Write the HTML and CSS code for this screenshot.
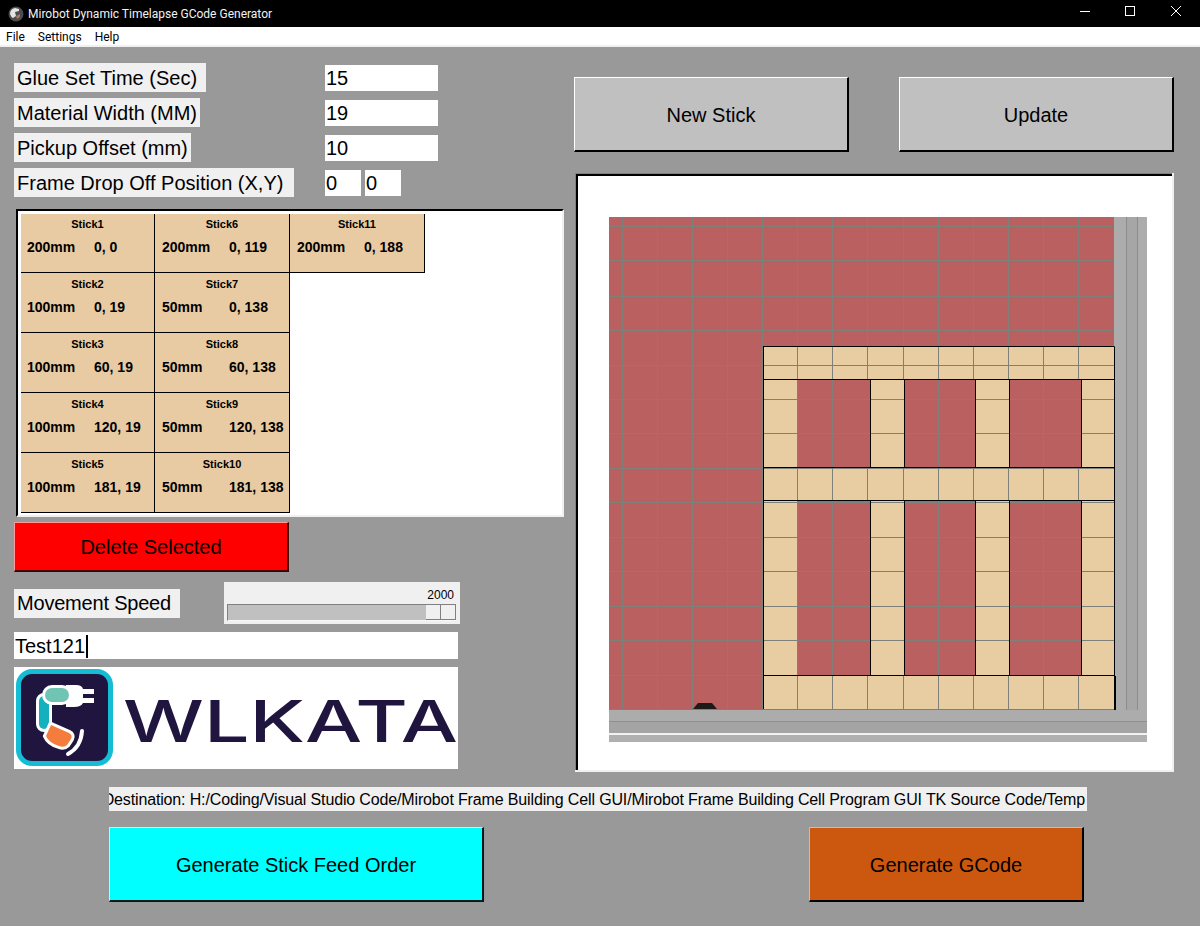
FILE: index.html
```html
<!DOCTYPE html>
<html lang="en">

<head>
    <meta charset="UTF-8">
    <title>Mirobot Dynamic Timelapse GCode Generator</title>
    <link rel="stylesheet" href="styles.css">
</head>

<body>
    <div class="app">
        <div class="titlebar">
            <svg class="app-icon" width="16" height="16" viewBox="0 0 16 16">
                <circle cx="8" cy="8" r="7.5" fill="#4c4c4c"/>
                <path d="M2 8 Q2 3 7 2 L11 3 L11 5 L7 6 L8 10 L5 12 Q3 11 2 8 Z" fill="#e4e4e4"/>
                <path d="M8 10 L12 8 L12 11 L9 13 Z" fill="#a8785e"/>
            </svg>
            <span class="title-text">Mirobot Dynamic Timelapse GCode Generator</span>
            <div class="win-btns">
                <svg width="46" height="27" viewBox="0 0 46 27"><path d="M19 11.5 H29" stroke="#fff"/></svg>
                <svg width="46" height="27" viewBox="0 0 46 27"><rect x="18.5" y="6.5" width="9" height="9" fill="none" stroke="#fff"/></svg>
                <svg width="46" height="27" viewBox="0 0 46 27"><path d="M18 6 L28 16 M28 6 L18 16" stroke="#fff"/></svg>
            </div>
        </div>
        <div class="menubar">
            <span>File</span>
            <span>Settings</span>
            <span>Help</span>
        </div>

        <div class="main">
            <div class="top">
                <div class="left">
                    <div class="form-row">
                        <div class="label">Glue Set Time (Sec)&nbsp;</div>
                        <div class="field">15</div>
                    </div>
                    <div class="form-row">
                        <div class="label">Material Width (MM)</div>
                        <div class="field">19</div>
                    </div>
                    <div class="form-row">
                        <div class="label">Pickup Offset (mm)</div>
                        <div class="field">10</div>
                    </div>
                    <div class="form-row">
                        <div class="label label-drop">Frame Drop Off Position (X,Y)</div>
                        <div class="field-pair">
                            <div class="field">0</div>
                            <div class="field">0</div>
                        </div>
                    </div>

                    <div class="stick-list">
                        <div class="stick"><div class="stick-name">Stick1</div><div class="stick-data"><span>200mm</span><span>0, 0</span></div></div>
                        <div class="stick"><div class="stick-name">Stick2</div><div class="stick-data"><span>100mm</span><span>0, 19</span></div></div>
                        <div class="stick"><div class="stick-name">Stick3</div><div class="stick-data"><span>100mm</span><span>60, 19</span></div></div>
                        <div class="stick"><div class="stick-name">Stick4</div><div class="stick-data"><span>100mm</span><span>120, 19</span></div></div>
                        <div class="stick"><div class="stick-name">Stick5</div><div class="stick-data"><span>100mm</span><span>181, 19</span></div></div>
                        <div class="stick"><div class="stick-name">Stick6</div><div class="stick-data"><span>200mm</span><span>0, 119</span></div></div>
                        <div class="stick"><div class="stick-name">Stick7</div><div class="stick-data"><span>50mm</span><span>0, 138</span></div></div>
                        <div class="stick"><div class="stick-name">Stick8</div><div class="stick-data"><span>50mm</span><span>60, 138</span></div></div>
                        <div class="stick"><div class="stick-name">Stick9</div><div class="stick-data"><span>50mm</span><span>120, 138</span></div></div>
                        <div class="stick"><div class="stick-name">Stick10</div><div class="stick-data"><span>50mm</span><span>181, 138</span></div></div>
                        <div class="stick"><div class="stick-name">Stick11</div><div class="stick-data"><span>200mm</span><span>0, 188</span></div></div>
                    </div>

                    <div class="btn btn-delete">Delete Selected</div>

                    <div class="speed-row">
                        <div class="label label-speed">Movement Speed</div>
                        <div class="scale">
                            <div class="scale-value">2000</div>
                            <div class="scale-trough">
                                <div class="scale-thumb"></div>
                            </div>
                        </div>
                    </div>

                    <div class="entry">Test121<span class="caret"></span></div>

                    <div class="logo">
                        <svg class="logo-icon" width="97" height="97" viewBox="0 0 97 97">
                            <rect width="97" height="97" rx="16" fill="#16bcd4"/>
                            <rect x="5" y="5" width="87" height="87" rx="11" fill="#20153f"/>
                            <path d="M50 16 H60 Q66 16 67 20 H78 V25 H67 V29 H78 V34 H67 Q65 38 58 38 H50 Z" fill="#fff"/>
                            <rect x="23" y="27" width="10" height="33" rx="5" fill="#14b0bd" stroke="#fff" stroke-width="6" paint-order="stroke"/>
                            <rect x="29" y="19" width="24" height="14" rx="7" fill="#6fc4b4" stroke="#fff" stroke-width="6" paint-order="stroke"/>
                            <path d="M35 56 L53 64 Q57 66 55 70 L51 76 Q48 79 43 77 Q33 74 30 67 Z" fill="#f47c3c" stroke="#fff" stroke-width="6" paint-order="stroke"/>
                            <path d="M66 62 Q65 78 52 85" fill="none" stroke="#fff" stroke-width="4" stroke-linecap="round"/>
                        </svg>
                        <svg class="logo-word" width="337" height="102" viewBox="0 0 337 102">
                            <text x="2" y="75" font-family="Inter" font-weight="500" font-size="58" fill="#20153f" textLength="335" lengthAdjust="spacingAndGlyphs">WLKATA</text>
                        </svg>
                    </div>
                </div>

                <div class="right">
                    <div class="btn-row">
                        <div class="btn btn-grey">New Stick</div>
                        <div class="btn btn-grey">Update</div>
                    </div>
                    <div class="canvas">
                        <svg width="538" height="525" viewBox="609 217 538 525">
                            <!-- table -->
                            <rect x="609" y="217" width="505" height="493" fill="#bb6060"/>

                            <!-- sticks -->
                            <g fill="#e8cca2">
                                <rect x="763" y="346" width="351" height="33"/>
                                <rect x="763" y="468" width="351" height="33"/>
                                <rect x="763" y="676" width="351" height="34"/>
                                <rect x="763" y="379" width="34" height="297"/>
                                <rect x="870" y="379" width="34" height="297"/>
                                <rect x="976" y="379" width="33" height="297"/>
                                <rect x="1081" y="379" width="33" height="297"/>
                            </g>

                            <!-- grid -->
                            <path stroke="#80807a" fill="none" d="M622.5 217V709 M657.5 217V709 M692.5 217V709 M727.5 217V709 M762.5 217V709 M832.5 217V709 M938.5 217V709 M1043.5 217V709
                                M797.5 217V379 M797.5 379V709 M867.5 217V379 M903.5 217V379 M973.5 217V379 M1008.5 217V379 M1078.5 217V379
                                M867.5 468V501 M903.5 468V501 M973.5 468V501 M1008.5 468V501 M1078.5 468V501 M867.5 676V709 M903.5 676V709 M973.5 676V709 M1008.5 676V709 M1078.5 676V709
                                M609 226.5H1114 M609 260.5H1114 M609 296.5H1114 M609 330.5H1114 M609 365.5H1114 M609 399.5H1114 M609 433.5H1114 M609 468.5H1114 M609 502.5H1114 M609 537.5H1114 M609 571.5H1114 M609 606.5H1114 M609 640.5H1114 M609 675.5H1114 M609 709.5H1114"/>

                            <!-- stick outlines -->
                            <path stroke="#000" fill="none" d="M763 346.5H1114.5V709 M763.5 346V709 M763 379.5H1114 M763 467.5H1114 M763 500.5H1114 M763 675.5H1114
                                M870.5 379V467 M870.5 501V675 M904.5 379V467 M904.5 501V675 M975.5 379V467 M975.5 501V675 M1009.5 379V467 M1009.5 501V675 M1081.5 379V467 M1081.5 501V675"/>

                            <!-- rails -->
                            <rect x="1115" y="217" width="32" height="493" fill="#acacac"/>
                            <rect x="1114" y="217" width="1" height="129" fill="#acacac"/>
                            <rect x="1114" y="676" width="2" height="34" fill="#000"/>
                            <rect x="1127" y="217" width="10" height="493" fill="#a6a6a6"/>
                            <path d="M1126.5 217V710 M1137.5 217V710" stroke="#8c8c8c"/>
                            <rect x="609" y="710" width="538" height="32" fill="#acacac"/>
                            <rect x="609" y="722" width="538" height="11" fill="#a4a4a4"/>
                            <rect x="609" y="721" width="538" height="1" fill="#8f8f8f"/>
                            <rect x="609" y="733" width="538" height="2" fill="#f2f2f2"/>
                            <rect x="609" y="735" width="538" height="7" fill="#b0b0b0"/>

                            <!-- gripper -->
                            <path d="M693 709 L698 703 H712 L717 709 Z" fill="#1f1a1a"/>
                        </svg>
                    </div>
                </div>
            </div>

            <div class="dest"><span>Destination: H:/Coding/Visual Studio Code/Mirobot Frame Building Cell GUI/Mirobot Frame Building Cell Program GUI TK Source Code/Temp</span></div>

            <div class="actions">
                <div class="btn btn-cyan">Generate Stick Feed Order</div>
                <div class="btn btn-orange">Generate GCode</div>
            </div>
        </div>
    </div>
</body>

</html>
```

FILE: styles.css
```css
* {
    margin: 0;
    padding: 0;
    box-sizing: border-box;
}

body {
    font-family: "Liberation Sans", Arial, sans-serif;
    color: #000;
}

.app {
    width: 1200px;
    height: 926px;
    display: flex;
    flex-direction: column;
    overflow: hidden;
    background-color: #999999;
}

/* window chrome */
.titlebar {
    height: 27px;
    flex: none;
    display: flex;
    align-items: center;
    background-color: #000;
    color: #f2f2f2;
    font-family: Roboto, sans-serif;
    font-size: 12px;
}

.app-icon {
    margin-left: 8px;
}

.title-text {
    margin-left: 4px;
}

.win-btns {
    margin-left: auto;
    display: flex;
    margin-right: 1px;
}

.menubar {
    height: 20px;
    flex: none;
    display: flex;
    gap: 13px;
    padding: 2px 0 0 6px;
    background-color: #fff;
    border-bottom: 2px solid #f0f0f0;
    font-family: Roboto, sans-serif;
    font-size: 12px;
    line-height: 16px;
}

.main {
    flex: 1;
    padding: 16px 0 0 14px;
}

.top {
    display: flex;
}

.left {
    width: 560px;
    flex: none;
}

/* form */
.form-row {
    display: grid;
    grid-template-columns: 311px 113px;
    align-items: center;
    height: 29px;
    margin-bottom: 6px;
}

.label {
    justify-self: start;
    height: 29px;
    padding: 0 3px;
    background-color: #f0f0f0;
    font-size: 20px;
    line-height: 30px;
    white-space: nowrap;
}

.label-drop {
    width: 280px;
}

.label-speed {
    width: 166px;
    line-height: 29px;
    letter-spacing: -0.2px;
}

.field {
    height: 26px;
    padding-left: 1px;
    background-color: #fff;
    font-size: 20px;
    line-height: 26px;
}

.field-pair {
    display: flex;
    gap: 4px;
}

.field-pair .field {
    width: 36px;
}

/* stick list */
.stick-list {
    width: 548px;
    height: 308px;
    margin: 12px 0 0 2px;
    padding: 3px 0 0 3px;
    display: grid;
    grid-auto-flow: column;
    grid-template-rows: 59px repeat(4, 60px);
    grid-template-columns: 134px 135px 135px;
    justify-content: start;
    align-content: start;
    background-color: #fff;
    border-top: 2px solid #000;
    border-left: 2px solid #000;
    border-right: 2px solid #f0f0f0;
    border-bottom: 2px solid #f0f0f0;
}

.stick {
    padding-top: 5px;
    background-color: #e8cba2;
    border-right: 1px solid #000;
    border-bottom: 1px solid #000;
}

/* top row is a pixel shorter */
.stick:nth-child(5n+1) {
    padding-top: 4px;
}

.stick-name {
    text-align: center;
    font-size: 11px;
    font-weight: bold;
    line-height: 13px;
}

.stick-data {
    display: grid;
    grid-template-columns: 67px 1fr;
    padding: 7px 0 0 6px;
    font-size: 14px;
    font-weight: bold;
    line-height: 18px;
    white-space: nowrap;
}

.stick:nth-child(n+6) .stick-data {
    padding-left: 7px;
}

/* buttons */
.btn {
    display: flex;
    align-items: center;
    justify-content: center;
    width: 275px;
    height: 75px;
    padding-top: 2px;
    font-size: 20px;
    border-style: solid;
    border-width: 1px 2px 2px 1px;
    border-color: #fff #000 #000 #fff;
}

.btn-delete {
    height: 50px;
    margin-top: 5px;
    background-color: #ff0000;
    border-color: #ff9a9a #400000 #400000 #ff9a9a;
}

.btn-grey {
    background-color: #c0c0c0;
}

.btn-cyan {
    width: 375px;
    background-color: #00ffff;
    border-color: #a0ffff #001a1a #001a1a #a0ffff;
}

.btn-orange {
    background-color: #cc5810;
    border-color: #f0b090 #000 #000 #f0b090;
}

/* speed */
.speed-row {
    display: flex;
    align-items: center;
    margin-top: 10px;
}

.scale {
    width: 236px;
    height: 42px;
    margin-left: 44px;
    padding: 6px 4px 0 3px;
    background-color: #f0f0f0;
}

.scale-value {
    text-align: right;
    padding-right: 2px;
    font-size: 12px;
    line-height: 14px;
}

.scale-trough {
    display: flex;
    justify-content: flex-end;
    height: 17px;
    margin-top: 2px;
    background-color: #c0c0c0;
    border-top: 1px solid #808080;
    border-left: 1px solid #808080;
    border-bottom: 1px solid #f8f8f8;
}

.scale-thumb {
    width: 30px;
    height: 15px;
    background: linear-gradient(to right, #f0f0f0 14px, #808080 14px, #808080 15px, #f0f0f0 15px);
    border-right: 1px solid #808080;
    border-bottom: 1px solid #808080;
}

.entry {
    width: 444px;
    height: 27px;
    margin-top: 8px;
    padding: 1px 0 0 1px;
    background-color: #fff;
    font-size: 20px;
    line-height: 27px;
    display: flex;
    align-items: center;
}

.caret {
    width: 2px;
    height: 23px;
    margin-left: 1px;
    background-color: #000;
}

.logo {
    display: flex;
    width: 444px;
    height: 102px;
    margin-top: 8px;
    padding-left: 2px;
    background-color: #fff;
}

.logo-icon {
    margin-top: 2px;
}

.logo-word {
    margin-left: 8px;
}

/* right side */
.right {
    width: 600px;
    margin-top: 14px;
}

.btn-row {
    display: flex;
    gap: 50px;
}

.canvas {
    width: 599px;
    height: 599px;
    margin: 21px 0 0 1px;
    padding: 44px 0 0 34px;
    background-color: #fff;
    box-shadow: inset -2px -2px #f0f0f0, inset 1px 1px #808080, inset 3px 3px #000;
}

.canvas svg {
    display: block;
}

/* bottom */
.dest {
    display: flex;
    justify-content: flex-end;
    width: 978px;
    height: 24px;
    margin: 15px 0 0 95px;
    padding-right: 2px;
    overflow: hidden;
    background-color: #f0f0f0;
    font-size: 16px;
    line-height: 25px;
    letter-spacing: -0.145px;
    white-space: nowrap;
}

.dest span {
    flex: none;
}

.actions {
    display: flex;
    gap: 325px;
    margin: 16px 0 0 95px;
}
```
